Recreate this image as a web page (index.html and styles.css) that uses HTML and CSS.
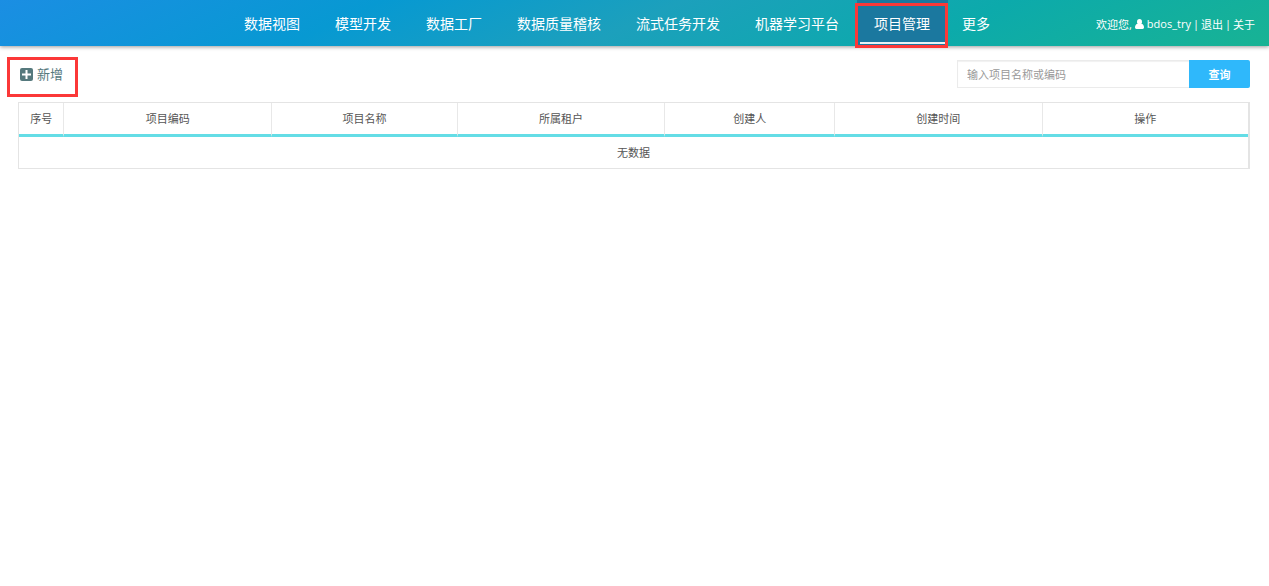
FILE: index.html
```html
<!DOCTYPE html>
<html lang="zh-CN">
<head>
  <meta charset="UTF-8" />
  <meta name="viewport" content="width=device-width, initial-scale=1.0"/>
  <title>项目管理</title>
  <link rel="stylesheet" href="styles.css">
</head>
<body>

  <header>
    <nav>
      <a href="#">数据视图</a>
      <a href="#">模型开发</a>
      <a href="#">数据工厂</a>
      <a href="#">数据质量稽核</a>
      <a href="#">流式任务开发</a>
      <a href="#">机器学习平台</a>
      <a href="#" class="active marked">项目管理</a>
      <a href="#" class="more">更多</a>
    </nav>
    <div class="user">
      <span>欢迎您,</span>
      <svg class="user-icon" viewBox="0 0 9 10" aria-hidden="true">
        <ellipse cx="4.500" cy="2.800" rx="2.500" ry="2.800" fill="#fff"/>
        <path d="M2.300 4.700C.8 5.200 0 6.700 0 8.600 0 9.500.6 10 1.400 10h6.200C8.400 10 9 9.500 9 8.600c0-1.900-.8-3.400-2.300-3.900z" fill="#fff"/>
      </svg>
      <span class="user-name">bdos_try</span>
      <span>|</span>
      <a href="#">退出</a>
      <span>|</span>
      <a href="#">关于</a>
    </div>
  </header>

  <main>
    <div class="toolbar">
      <button type="button" class="add-btn marked">
        <svg class="add-icon" viewBox="0 0 13 13" aria-hidden="true">
          <rect width="13" height="13" rx="2" fill="#55797d"/>
          <path d="M5.500 2h2v3.500H11v2H7.500V11h-2V7.500H2v-2h3.500z" fill="#fff"/>
        </svg>
        <span>新增</span>
      </button>
      <form class="search" onsubmit="return false">
        <input type="text" placeholder="输入项目名称或编码" aria-label="输入项目名称或编码">
        <button type="submit">查询</button>
      </form>
    </div>

    <table>
      <colgroup>
        <col class="col-index">
        <col class="col-code">
        <col class="col-name">
        <col class="col-tenant">
        <col class="col-creator">
        <col class="col-time">
        <col>
      </colgroup>
      <thead>
        <tr>
          <th>序号</th>
          <th>项目编码</th>
          <th>项目名称</th>
          <th>所属租户</th>
          <th>创建人</th>
          <th>创建时间</th>
          <th>操作</th>
        </tr>
      </thead>
      <tbody>
        <tr>
          <td colspan="7">无数据</td>
        </tr>
      </tbody>
    </table>
  </main>

</body>
</html>
```
FILE: styles.css
```css
* {
  margin: 0;
  padding: 0;
  box-sizing: border-box;
  font-family: 'Open Sans', 'Noto Sans CJK SC', sans-serif;
}

body {
  background-color: #fff;
  color: #555;
  font-size: 11px;
}

header {
  height: 46px;
  display: flex;
  align-items: stretch;
  justify-content: space-between;
  padding: 0 14px 0 227px;
  background: linear-gradient(155deg, #1b8ee3 0%, #0799d2 28%, #1ca0bc 50%, #0caaab 74%, #18b394 100%);
  box-shadow: 0 1px 4px rgba(0, 0, 0, 0.4);
}

header a {
  color: #fff;
  text-decoration: none;
}

nav {
  display: flex;
}

nav a {
  padding: 0 18px 0 17px;
  font-size: 14px;
  line-height: 47px;
  white-space: nowrap;
}

nav a.active {
  position: relative;
  background-color: #1b789f;
}

/* white line under the current item */
nav a.active::before {
  content: '';
  position: absolute;
  left: 3px;
  right: 3px;
  bottom: 2px;
  height: 2px;
  background-color: #e8f2f6;
}

nav a.more {
  padding: 0 14px;
}

.marked {
  position: relative;
}

.marked::after {
  content: '';
  position: absolute;
  border: 3px solid #fb3838;
}

nav a.marked::after {
  inset: 3px 0 -2px -2px;
}

.user {
  display: flex;
  align-items: center;
  gap: 2px;
  padding-top: 1px;
  color: #fff;
  white-space: nowrap;
}

.user-icon {
  width: 9px;
  height: 10px;
  margin: 0 1px;
}

.user-name {
  font-size: 11px;
}

main {
  padding: 14px 19px 0 18px;
}

.toolbar {
  display: flex;
  justify-content: space-between;
  align-items: center;
  margin-bottom: 14px;
}

.add-btn {
  display: flex;
  align-items: center;
  gap: 4px;
  padding-left: 2px;
  border: none;
  background: none;
  color: #55797d;
  font-size: 13px;
  line-height: 28px;
  cursor: pointer;
}

.add-btn.marked::after {
  inset: -3px -15px -9px -11px;
}

.add-icon {
  width: 13px;
  height: 13px;
}

.search {
  display: flex;
}

.search input {
  width: 232px;
  height: 28px;
  padding: 0 9px;
  border: 1px solid #ebebeb;
  border-right: none;
  box-shadow: inset 0 1px 1px rgba(0, 0, 0, 0.06);
  font-size: 11px;
  color: #555;
  outline: none;
}

.search input::placeholder {
  color: #999;
}

.search button {
  width: 61px;
  height: 28px;
  border: none;
  border-radius: 0 2px 2px 0;
  background-color: #2fb8fb;
  color: #fff;
  font-size: 11px;
  font-weight: bold;
  cursor: pointer;
}

table {
  width: 100%;
  table-layout: fixed;
  border-spacing: 0;
  border: 1px solid #e4e4e4;
  border-right-width: 2px;
}

.col-index {
  width: 3.7%;
}

.col-code,
.col-tenant,
.col-time {
  width: 16.9%;
}

.col-name {
  width: 15.1%;
}

.col-creator {
  width: 13.8%;
}

th,
td {
  text-align: center;
  font-weight: normal;
  line-height: 31px;
}

th {
  border-right: 1px solid #e8e8e8;
  border-bottom: 3px solid #64dde6;
}

th:last-child {
  border-right: none;
}
```
